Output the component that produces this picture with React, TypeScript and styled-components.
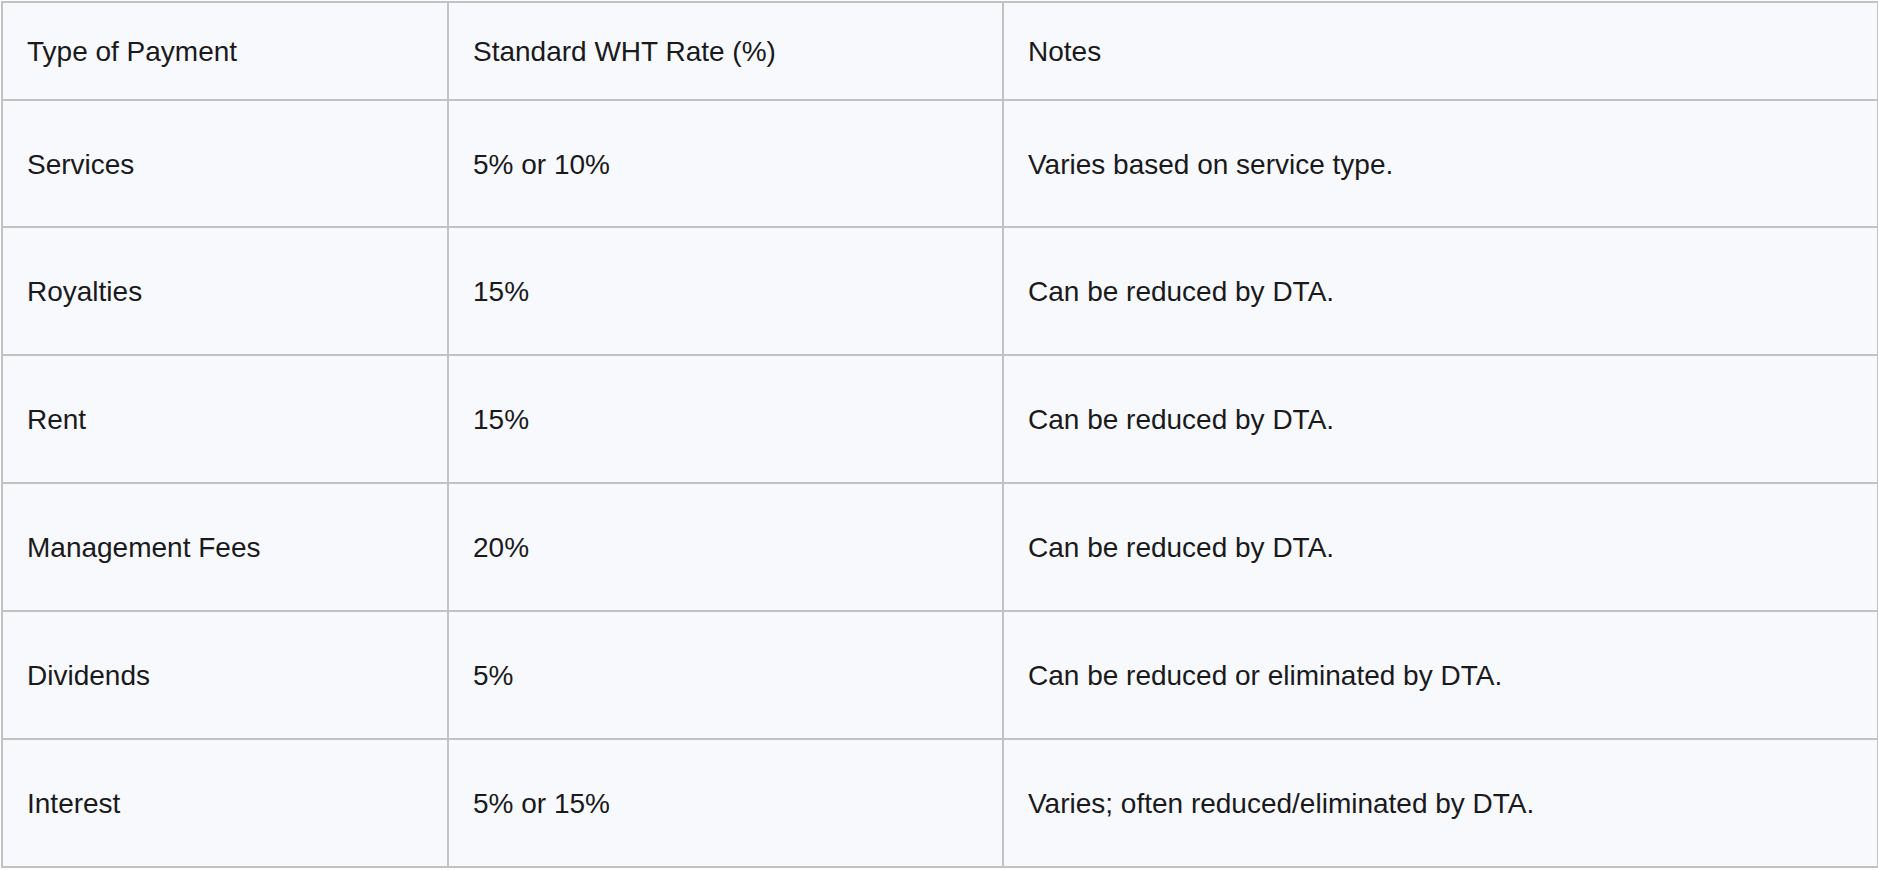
import React from 'react'
import styled, { createGlobalStyle } from 'styled-components'

const GlobalStyle = createGlobalStyle`
  html, body {
    margin: 0;
    padding: 0;
    background: #ffffff;
    overflow: hidden;
  }
  body {
    font-family: "Liberation Sans", Arial, Helvetica, sans-serif;
  }
`

const Table = styled.table`
  margin: 1px 0 0 1px;
  border-collapse: separate;
  border-spacing: 0;
  table-layout: fixed;
  width: 1878px;
  background: #f8f9fd;
  border-top: 2px solid #c2c2c2;
  border-left: 2px solid #c2c2c2;
  color: #1a1a1c;
  font-size: 28px;

  tbody tr:first-child td {
    height: 127px;
  }
`

const Cell = styled.td<{ $head?: boolean }>`
  box-sizing: border-box;
  height: ${p => (p.$head ? 98 : 128)}px;
  padding: 2px 24px 0;
  border-right: 2px solid #c2c2c2;
  border-bottom: 2px solid #c2c2c2;
  text-align: left;
  vertical-align: middle;
  font-weight: 400;
  line-height: 1.2;
  white-space: nowrap;
`

const rows = [
  ['Services', '5% or 10%', 'Varies based on service type.'],
  ['Royalties', '15%', 'Can be reduced by DTA.'],
  ['Rent', '15%', 'Can be reduced by DTA.'],
  ['Management Fees', '20%', 'Can be reduced by DTA.'],
  ['Dividends', '5%', 'Can be reduced or eliminated by DTA.'],
  ['Interest', '5% or 15%', 'Varies; often reduced/eliminated by DTA.'],
]

export default function App() {
  return (
    <>
      <GlobalStyle />
      <Table>
        <colgroup>
          <col style={{ width: 446 }} />
          <col style={{ width: 555 }} />
          <col />
        </colgroup>
        <thead>
          <tr>
            <Cell as="th" $head>Type of Payment</Cell>
            <Cell as="th" $head>Standard WHT Rate (%)</Cell>
            <Cell as="th" $head>Notes</Cell>
          </tr>
        </thead>
        <tbody>
          {rows.map(r => (
            <tr key={r[0]}>
              {r.map((c, i) => (
                <Cell key={i}>{c}</Cell>
              ))}
            </tr>
          ))}
        </tbody>
      </Table>
    </>
  )
}
